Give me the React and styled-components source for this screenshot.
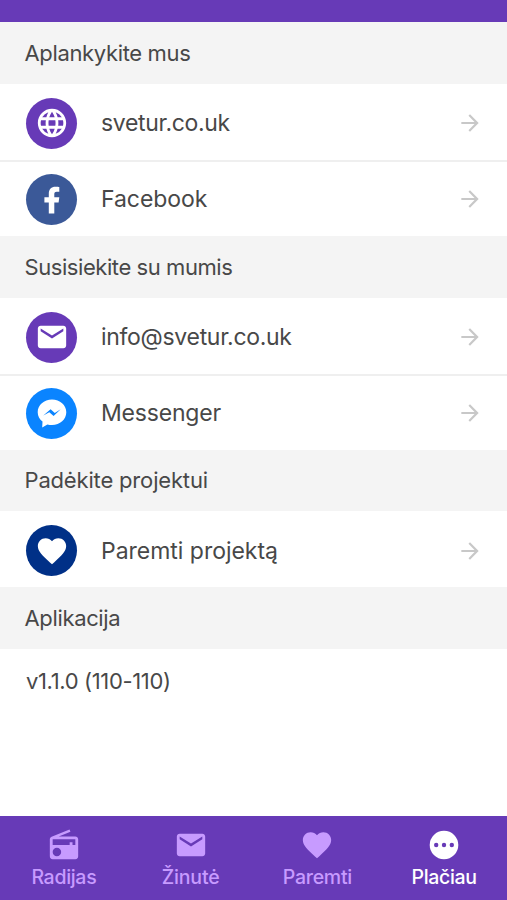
import styled, { createGlobalStyle } from "styled-components";
import {
  MdArrowForward,
  MdEmail,
  MdFavorite,
  MdLanguage,
  MdRadio,
} from "react-icons/md";

const FacebookIcon = () => (
  <svg viewBox="0 0 34 34" width="34" height="34" fill="#fff">
    <path d="M13.8 31.4V20.6H9.4v-5.3h4.4v-3.6c0-4.8 2.5-7 6.7-7 1.9 0 3.2.1 3.8.2v4.9h-2.6c-2 0-2.4 1-2.4 2.4v3.1h5l-.7 5.3h-4.3v10.8z" />
  </svg>
);

const MessengerIcon = () => (
  <svg viewBox="0 0 34 34" width="34" height="34">
    <path
      d="M17 3.5C9 3.5 2.7 9.1 2.7 16.2c0 3.8 1.8 7.1 4.8 9.3l-.3 6 5.2-3.1c1.5.4 3 .6 4.6.6 8 0 14.3-5.7 14.3-12.8S25 3.5 17 3.5z"
      fill="#fff"
    />
    <path d="M8.3 19.6l7.3-6.4 4.2 3.9 5.9-3.8-7.1 6.7-4.3-3.8z" fill="#0a84ff" />
  </svg>
);

const MoreIcon = () => (
  <svg viewBox="0 0 34 34" width="34" height="34">
    <circle cx="17" cy="17" r="14.3" fill="#fff" />
    <g fill="#673ab7">
      <circle cx="9.2" cy="17" r="2.2" />
      <circle cx="17" cy="17" r="2.2" />
      <circle cx="24.8" cy="17" r="2.2" />
    </g>
  </svg>
);

const sections = [
  {
    title: "Aplankykite mus",
    spacing: -0.35,
    rows: [
      { label: "svetur.co.uk", color: "#673ab7", icon: <MdLanguage />, spacing: -0.33 },
      { label: "Facebook", color: "#3b5998", icon: <FacebookIcon />, spacing: -0.05 },
    ],
  },
  {
    title: "Susisiekite su mumis",
    spacing: -0.43,
    rows: [
      { label: "info@svetur.co.uk", color: "#673ab7", icon: <MdEmail />, spacing: -0.3 },
      { label: "Messenger", color: "#0a84ff", icon: <MessengerIcon />, spacing: -0.2 },
    ],
  },
  {
    title: "Padėkite projektui",
    spacing: -0.17,
    rows: [
      { label: "Paremti projektą", color: "#003087", icon: <MdFavorite />, spacing: -0.02 },
    ],
  },
  { title: "Aplikacija", spacing: -0.35, rows: [] },
];

const tabs = [
  { label: "Radijas", icon: <MdRadio />, spacing: -0.3 },
  { label: "Žinutė", icon: <MdEmail />, spacing: -0.2 },
  { label: "Paremti", icon: <MdFavorite />, spacing: -0.25 },
  { label: "Plačiau", icon: <MoreIcon />, spacing: -0.35, active: true },
];

export default function App() {
  return (
    <Page>
      <GlobalStyle />
      <StatusBar />
      <Content>
        {sections.map((section) => (
          <section key={section.title}>
            <SectionTitle $spacing={section.spacing}>{section.title}</SectionTitle>
            {section.rows.map((row) => (
              <Row key={row.label}>
                <IconCircle $color={row.color}>{row.icon}</IconCircle>
                <RowLabel $spacing={row.spacing}>{row.label}</RowLabel>
                <Arrow />
              </Row>
            ))}
          </section>
        ))}
        <Version>v1.1.0 (110-110)</Version>
      </Content>
      <TabBar>
        {tabs.map((tab) => (
          <Tab key={tab.label} $active={tab.active}>
            {tab.icon}
            <TabLabel $spacing={tab.spacing}>{tab.label}</TabLabel>
          </Tab>
        ))}
      </TabBar>
    </Page>
  );
}

const GlobalStyle = createGlobalStyle`
  * {
    box-sizing: border-box;
  }
  body {
    margin: 0;
    background: #fff;
    font-family: Inter, "Noto Sans", sans-serif;
  }
`;
const Page = styled.div`
  height: 100vh;
  display: flex;
  flex-direction: column;
  overflow: hidden;
  color: #484848;
`;
const StatusBar = styled.div`
  height: 22px;
  flex-shrink: 0;
  background: #673ab7;
`;
const Content = styled.main`
  flex: 1;
  min-height: 0;
`;
const SectionTitle = styled.h2`
  height: 61.8px;
  margin: 0;
  padding: 0 25px 0 24.5px;
  display: flex;
  align-items: center;
  background: #f4f4f4;
  font-size: 22px;
  font-weight: 400;
  letter-spacing: ${({ $spacing }) => $spacing}px;
`;
const Row = styled.div`
  height: 76px;
  padding: 3px 24px 0 26px;
  display: flex;
  align-items: center;

  & + & {
    padding-top: 1px;
    border-top: 2px solid #efefef;
  }
`;
const IconCircle = styled.div`
  width: 51px;
  height: 51px;
  flex-shrink: 0;
  display: flex;
  align-items: center;
  justify-content: center;
  border-radius: 50%;
  background: ${({ $color }) => $color};
  color: #fff;
  font-size: 34px;
`;
const RowLabel = styled.span`
  flex: 1;
  margin-left: 24px;
  font-size: 23px;
  letter-spacing: ${({ $spacing }) => $spacing}px;
`;
const Arrow = styled(MdArrowForward)`
  width: 26px;
  height: 26px;
  color: #c8c8c8;
`;
const Version = styled.div`
  padding: 19px 26px;
  font-size: 22px;
  letter-spacing: -0.35px;
`;
const TabBar = styled.nav`
  height: 84.5px;
  flex-shrink: 0;
  display: grid;
  grid-template-columns: repeat(4, 1fr);
  background: #673ab7;
`;
const Tab = styled.div`
  padding: 12px 0 0 1px;
  display: flex;
  flex-direction: column;
  align-items: center;
  color: ${({ $active }) => ($active ? "#fff" : "#c79bff")};
  font-size: 34px;
`;
const TabLabel = styled.span`
  margin-top: 2px;
  font-size: 19.5px;
  font-weight: 500;
  line-height: 26px;
  letter-spacing: ${({ $spacing }) => $spacing}px;
`;
